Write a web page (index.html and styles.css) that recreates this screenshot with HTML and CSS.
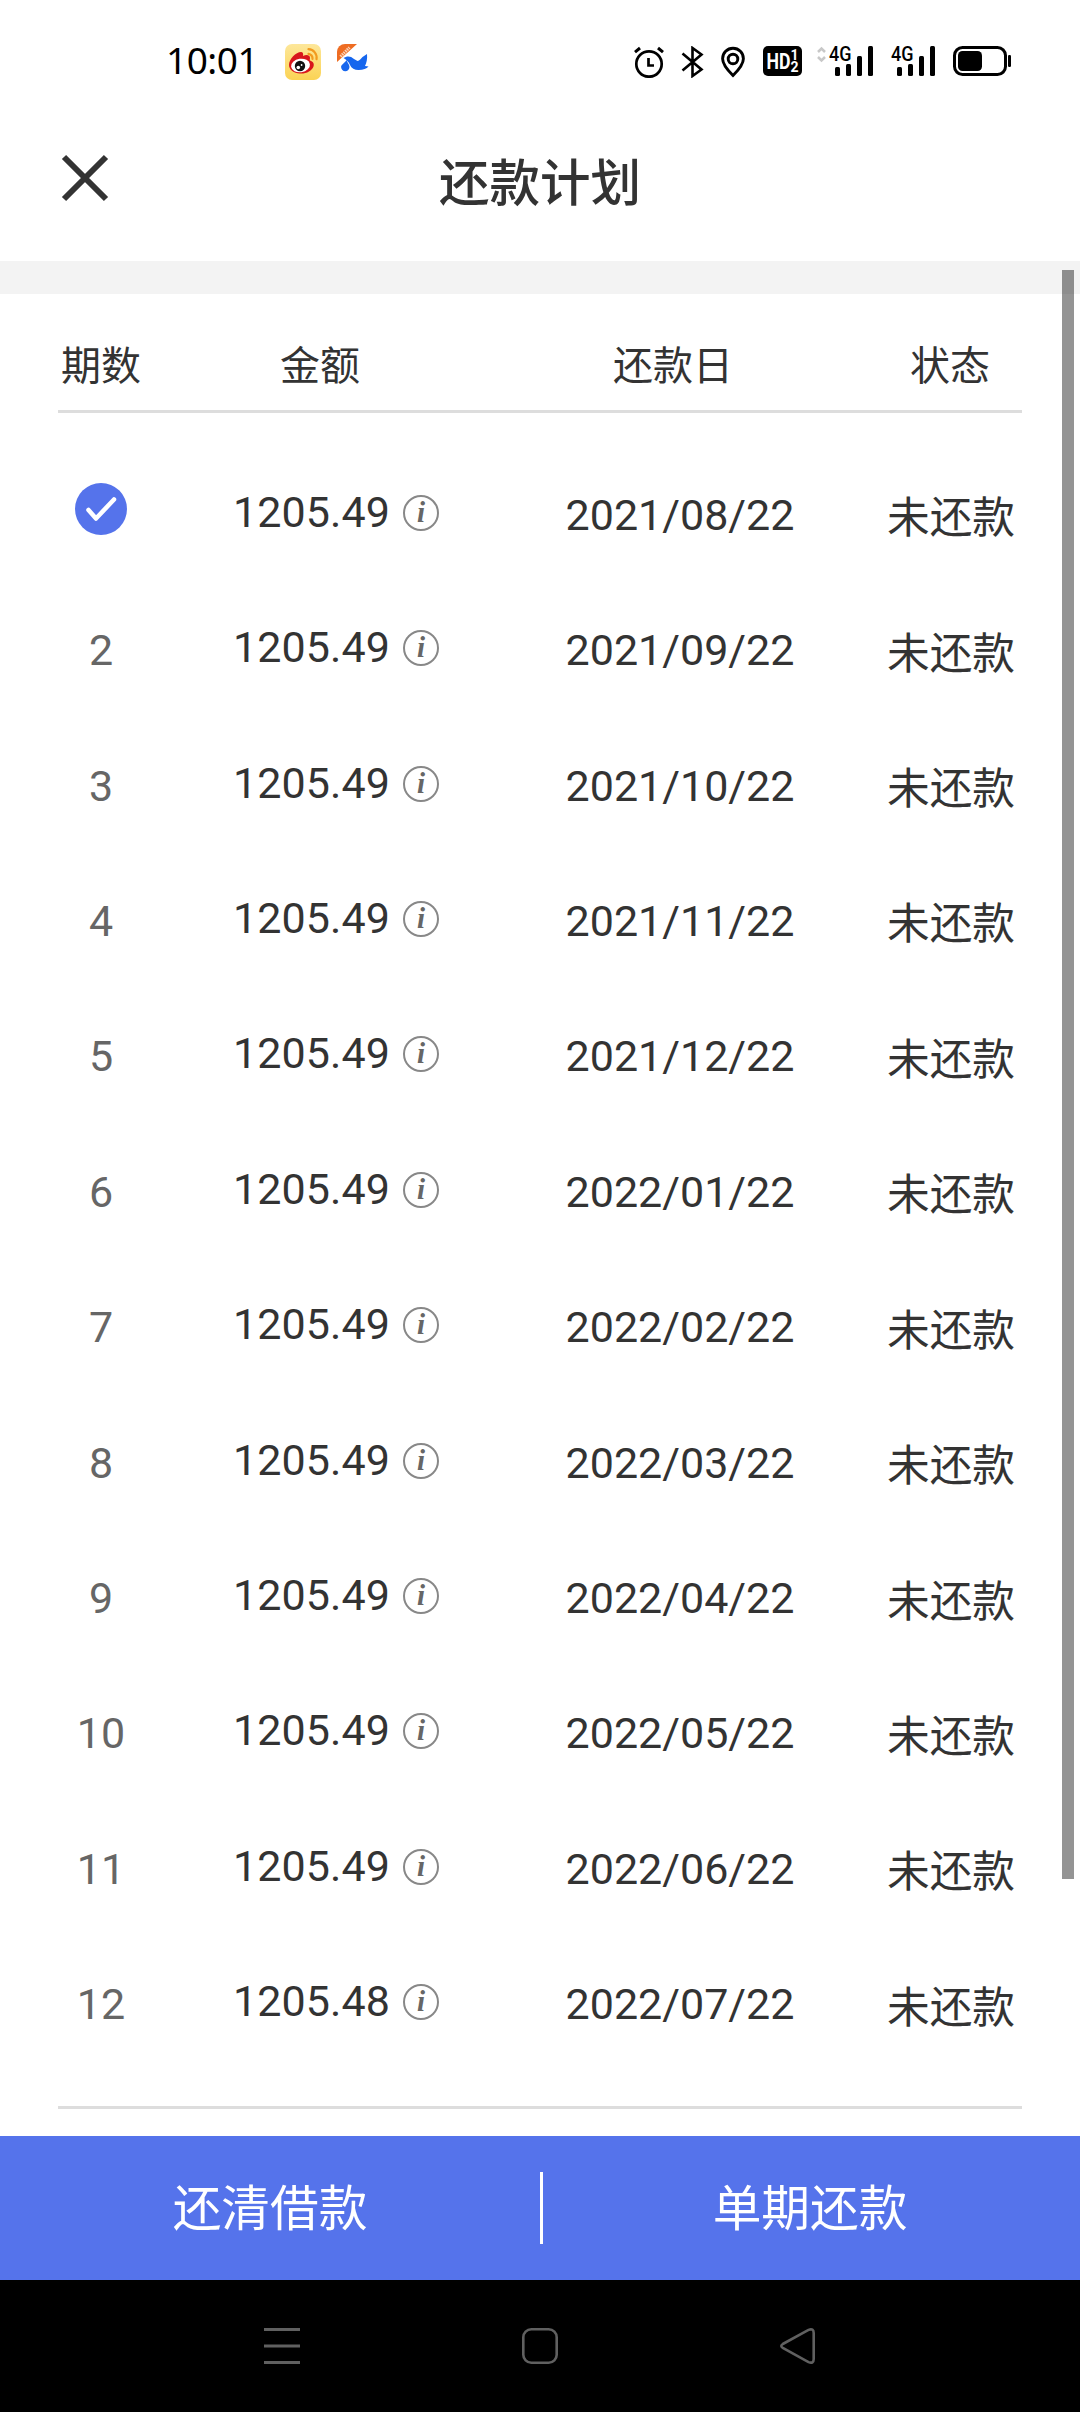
FILE: index.html
```html
<!DOCTYPE html>
<html lang="zh-CN">
<head>
  <meta charset="UTF-8">
  <title>还款计划</title>
  <link rel="stylesheet" href="styles.css">
</head>
<body>
  <!-- Status bar -->
  <div class="status-bar">
    <span class="time">10:01</span>
    <svg class="app-weibo" width="36" height="36" viewBox="0 0 36 36">
      <defs>
        <linearGradient id="weiboBg" x1="0" y1="0" x2="0" y2="1">
          <stop offset="0" stop-color="#fde79a"/>
          <stop offset="1" stop-color="#fbd354"/>
        </linearGradient>
      </defs>
      <rect width="36" height="36" rx="7" fill="url(#weiboBg)"/>
      <path d="M4 21C4 15 11 8 16 8c2 0 2.500 2 2 4 3-1.500 7-1.500 7 2 0 1-.5 2 0 2.500 3 1 4.500 3 3.500 6C27 27 21 30 15 29.500 9 29 4 26 4 21z" fill="#d8161c"/>
      <ellipse cx="15.500" cy="21.500" rx="9.500" ry="6.700" fill="#fff" transform="rotate(-8 15.500 21.500)"/>
      <circle cx="15" cy="22" r="5.200" fill="#111"/>
      <circle cx="13.300" cy="23.500" r="1.800" fill="#fff"/>
      <circle cx="16.600" cy="21" r=".9" fill="#fff"/>
      <path d="M23.500 5.200a8.500 8.500 0 0 1 8 10M23.500 9.800a4.500 4.500 0 0 1 4 5" fill="none" stroke="#f29a1f" stroke-width="2.200" stroke-linecap="round"/>
    </svg>
    <svg class="app-bird" width="32" height="36" viewBox="0 0 32 36">
      <path d="M0 18V8a8 8 0 0 1 8-8h12z" fill="#ee6c22"/>
      <path d="M3.500 12.500l9-9" stroke="#fbd3b8" stroke-width="3" stroke-dasharray="1.500 .8"/>
      <path d="M6.500 14c3-2 7-2.500 10.500 1l3.500 2c2-.5 3.500-2.500 5-4l4.500-3c.5 5-.5 9-2 12l3.500.5c-2 2-5 3.500-10 3.500-4 0-7-1.500-8.500-5C12 18 9 15.500 6.500 14z" fill="#1666ee"/>
      <path d="M9.500 16c1 3 3 4.500 3 7a4.200 4.200 0 1 1-8.400 0c0-2.500 3.900-4 5.400-7z" fill="#1666ee"/>
    </svg>

    <svg class="alarm" width="30" height="32" viewBox="0 0 30 32" fill="none" stroke="#000" stroke-width="2.700">
      <circle cx="15" cy="18" r="12.700"/>
      <path d="M1 6.200L6 2M24 2l5 4.200" stroke-width="3"/>
      <path d="M14.500 12v7.500H20"/>
    </svg>
    <svg class="bluetooth" width="23" height="32" viewBox="0 0 23 32" fill="none" stroke="#000" stroke-width="2.600">
      <path d="M1.500 7.500l19 16-9 6.500V2l9 6.500-19 16"/>
    </svg>
    <svg class="pin" width="24" height="32" viewBox="0 0 24 32" fill="none" stroke="#000" stroke-width="2.900">
      <path d="M12 29.500C6 23.500 1.600 18.500 1.600 12.700a10.400 10.400 0 0 1 20.800 0C22.400 18.500 18 23.500 12 29.500z"/>
      <circle cx="12" cy="13" r="4.800"/>
    </svg>
    <svg class="hd" width="39" height="32" viewBox="0 0 39 32">
      <rect width="39" height="30" rx="5"/>
      <g fill="#fff" font-family="Roboto, sans-serif" font-weight="700">
        <text x="3.500" y="23" font-size="22" textLength="24" lengthAdjust="spacingAndGlyphs">HD</text>
        <text x="27.500" y="14" font-size="14">1</text>
        <text x="27.500" y="25.500" font-size="14">2</text>
      </g>
    </svg>
    <svg class="signal" width="57" height="32" viewBox="0 0 57 32">
      <path d="M1 6l3.500-3.500L8 6M1 11l3.500 3.500L8 11" fill="none" stroke="#c8c8c8" stroke-width="2.500"/>
      <text x="12" y="15" font-size="20.500" font-weight="500" font-family="Roboto, sans-serif" textLength="22.500" lengthAdjust="spacingAndGlyphs">4G</text>
      <rect x="18" y="21" width="5" height="9" rx="1.500"/>
      <rect x="29" y="18" width="5" height="12" rx="1.500"/>
      <rect x="40" y="10" width="5" height="20" rx="1.500"/>
      <rect x="51" y="0" width="5" height="30" rx="1.500"/>
    </svg>
    <svg class="signal" width="45" height="32" viewBox="12 0 45 32">
      <text x="12" y="15" font-size="20.500" font-weight="500" font-family="Roboto, sans-serif" textLength="22.500" lengthAdjust="spacingAndGlyphs">4G</text>
      <rect x="18" y="21" width="5" height="9" rx="1.500"/>
      <rect x="29" y="18" width="5" height="12" rx="1.500"/>
      <rect x="40" y="10" width="5" height="20" rx="1.500"/>
      <rect x="51" y="0" width="5" height="30" rx="1.500"/>
    </svg>
    <svg class="battery" width="58" height="32" viewBox="0 0 58 32">
      <rect x="1.500" y="1.500" width="51" height="27" rx="8" fill="none" stroke="#000" stroke-width="3"/>
      <rect x="5" y="5" width="24" height="20" rx="4.500"/>
      <rect x="55" y="9" width="3" height="12" rx="1.200"/>
    </svg>
  </div>

  <!-- Title bar -->
  <div class="title-bar">
    <svg class="close" width="48" height="48" viewBox="0 0 48 48" stroke="#333" stroke-width="6">
      <path d="M3 3l42 42M45 3L3 45"/>
    </svg>
    <h1>还款计划</h1>
  </div>

  <div class="content">
    <div class="scrollbar"></div>

    <div class="plan">
      <div class="plan-head">
        <span>期数</span>
        <span>金额</span>
        <span>还款日</span>
        <span class="head-state">状态</span>
      </div>

      <div class="plan-body">
        <div class="row">
          <span class="no">
            <svg class="checked" width="52" height="52" viewBox="0 0 52 52">
              <circle cx="26" cy="26" r="26" fill="#5573eb"/>
              <path d="M13.500 27L21 35.500 39 16.500" fill="none" stroke="#fff" stroke-width="4.500" stroke-linecap="round" stroke-linejoin="round"/>
            </svg>
          </span>
          <span class="amount">1205.49<i class="info">i</i></span>
          <span class="date">2021/08/22</span>
          <span class="state">未还款</span>
        </div>
        <div class="row">
          <span class="no">2</span>
          <span class="amount">1205.49<i class="info">i</i></span>
          <span class="date">2021/09/22</span>
          <span class="state">未还款</span>
        </div>
        <div class="row">
          <span class="no">3</span>
          <span class="amount">1205.49<i class="info">i</i></span>
          <span class="date">2021/10/22</span>
          <span class="state">未还款</span>
        </div>
        <div class="row">
          <span class="no">4</span>
          <span class="amount">1205.49<i class="info">i</i></span>
          <span class="date">2021/11/22</span>
          <span class="state">未还款</span>
        </div>
        <div class="row">
          <span class="no">5</span>
          <span class="amount">1205.49<i class="info">i</i></span>
          <span class="date">2021/12/22</span>
          <span class="state">未还款</span>
        </div>
        <div class="row">
          <span class="no">6</span>
          <span class="amount">1205.49<i class="info">i</i></span>
          <span class="date">2022/01/22</span>
          <span class="state">未还款</span>
        </div>
        <div class="row">
          <span class="no">7</span>
          <span class="amount">1205.49<i class="info">i</i></span>
          <span class="date">2022/02/22</span>
          <span class="state">未还款</span>
        </div>
        <div class="row">
          <span class="no">8</span>
          <span class="amount">1205.49<i class="info">i</i></span>
          <span class="date">2022/03/22</span>
          <span class="state">未还款</span>
        </div>
        <div class="row">
          <span class="no">9</span>
          <span class="amount">1205.49<i class="info">i</i></span>
          <span class="date">2022/04/22</span>
          <span class="state">未还款</span>
        </div>
        <div class="row">
          <span class="no">10</span>
          <span class="amount">1205.49<i class="info">i</i></span>
          <span class="date">2022/05/22</span>
          <span class="state">未还款</span>
        </div>
        <div class="row">
          <span class="no">11</span>
          <span class="amount">1205.49<i class="info">i</i></span>
          <span class="date">2022/06/22</span>
          <span class="state">未还款</span>
        </div>
        <div class="row">
          <span class="no">12</span>
          <span class="amount">1205.48<i class="info">i</i></span>
          <span class="date">2022/07/22</span>
          <span class="state">未还款</span>
        </div>
      </div>
    </div>
  </div>

  <!-- Bottom buttons -->
  <div class="actions">
    <button>还清借款</button>
    <span class="divider"></span>
    <button>单期还款</button>
  </div>

  <!-- System navigation -->
  <div class="nav-bar">
    <svg width="36" height="36" viewBox="0 0 36 36" fill="#606060">
      <path d="M0 0h36v3H0zM0 16.500h36v3H0zM0 33h36v3H0z"/>
    </svg>
    <svg width="36" height="36" viewBox="0 0 36 36" fill="none" stroke="#606060" stroke-width="2.600">
      <rect x="1.300" y="1.300" width="33.400" height="33.400" rx="8"/>
    </svg>
    <svg width="36" height="36" viewBox="0 0 36 36" fill="none" stroke="#606060" stroke-width="2.600">
      <path d="M2.800 16L28.500 1.900Q33.700 0 33.700 5v26q0 5-5.200 3.100L2.800 20q-3-2 0-4z"/>
    </svg>
  </div>
</body>
</html>
```

FILE: styles.css
```css
* {
  box-sizing: border-box;
}

body {
  margin: 0;
  width: 1080px;
  height: 2412px;
  display: flex;
  flex-direction: column;
  overflow: hidden;
  background: #fff;
  color: #333;
  font-family: Roboto, "Noto Sans CJK SC", sans-serif;
}

svg {
  display: block;
  flex: none;
}

/* status bar */
.status-bar {
  height: 108px;
  padding: 44px 69px 0 166px;
  display: flex;
  align-items: flex-start;
}

.time {
  width: 119px;
  line-height: 32px;
  font-family: "Noto Sans", sans-serif;
  font-size: 37px;
  letter-spacing: -0.500px;
  color: #000;
}

.app-bird {
  margin: 0 auto 0 16px;
}

.alarm,
.bluetooth,
.pin,
.hd,
.signal,
.battery {
  margin-top: 2px;
}

.signal {
  overflow: visible;
}

.bluetooth {
  margin-left: 17px;
}

.pin {
  margin-left: 17px;
}

.hd {
  margin-left: 18px;
}

.signal {
  margin-left: 15px;
}

.signal + .signal {
  margin-left: 17px;
}

.battery {
  margin-left: 17px;
}

/* title bar */
.title-bar {
  height: 153px;
  padding: 0 61px;
  display: grid;
  grid-template-columns: 48px 1fr 48px;
  align-items: start;
}

.close {
  margin-top: 46px;
}

.title-bar h1 {
  margin: 39px 0 0;
  font-size: 50.500px;
  line-height: 74px;
  font-weight: 500;
  text-align: center;
}

/* repayment plan */
.content {
  flex: 1;
  position: relative;
  border-top: 33px solid #f3f3f3;
}

.scrollbar {
  position: absolute;
  top: -24px;
  right: 6px;
  width: 12px;
  height: 1609px;
  background: rgba(0, 0, 0, 0.42);
}

.plan {
  margin: 0 58px;
}

.plan-head {
  height: 119px;
  padding-top: 43px;
  display: grid;
  grid-template-columns: 86px 352px 354px 1fr;
  border-bottom: 3px solid #ddd;
  font-size: 40px;
  line-height: 60px;
  text-align: center;
}

.head-state {
  padding-left: 28px;
}

.plan-body {
  height: 1696px;
  padding: 34px 0;
  display: grid;
  grid-template-rows: repeat(12, 1fr);
  border-bottom: 3px solid #ddd;
}

.row {
  display: grid;
  grid-template-columns: 86px 332px 404px 1fr;
  align-items: center;
  font-size: 43px;
  line-height: 60px;
  text-align: center;
}

.no {
  color: #666;
}

.checked {
  margin: 0 auto 12px 17px;
}

.amount {
  display: flex;
  align-items: center;
  padding: 0 0 6px 89px;
  letter-spacing: 0.100px;
}

.info {
  width: 36px;
  height: 36px;
  margin: 2px 0 0 13px;
  border: 2px solid #888;
  border-radius: 50%;
  color: #666;
  font: italic bold 29px/31px "Liberation Serif", serif;
}

.date {
  padding-left: 4px;
}

.state {
  padding-top: 7px;
  font-size: 42.700px;
}

/* bottom buttons */
.actions {
  height: 144px;
  display: flex;
  align-items: center;
  background: #5573eb;
}

.actions button {
  flex: 1;
  padding: 4px 0 0;
  border: none;
  background: none;
  color: #fff;
  font-family: inherit;
  font-size: 48.700px;
  line-height: 72px;
}

.divider {
  width: 3px;
  height: 72px;
  margin: 0 -3px 0 0;
  background: #fff;
}

.nav-bar {
  height: 132px;
  padding: 0 264px;
  display: flex;
  align-items: center;
  justify-content: space-between;
  background: #000;
}
```
